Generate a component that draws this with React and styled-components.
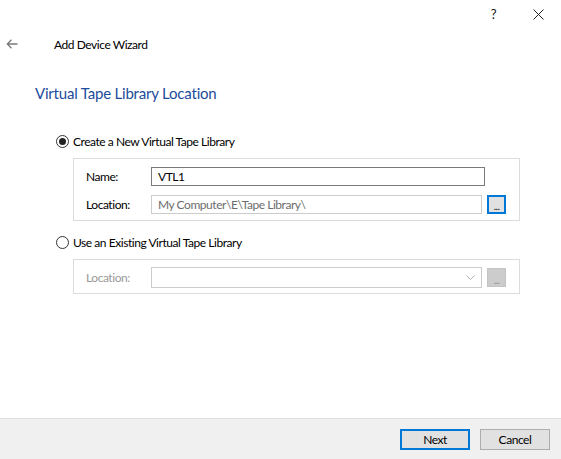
import React from 'react';
import styled, { createGlobalStyle } from 'styled-components';

const GlobalStyle = createGlobalStyle`
  html, body { margin: 0; padding: 0; background: #fff; }
  body {
    font-family: "Segoe UI", Lato, "Noto Sans", sans-serif;
    font-size: 12px;
    letter-spacing: -0.45px;
    color: #000;
  }
`;

const Window = styled.div`
  width: 561px;
  height: 459px;
  display: flex;
  flex-direction: column;
  background: #fff;
  overflow: hidden;
`;

const TitleBar = styled.div`
  height: 28px;
  display: flex;
  justify-content: flex-end;
`;

const CaptionButton = styled.div`
  width: 45px;
  height: 28px;
  display: flex;
  align-items: center;
  justify-content: center;
  font-size: 13px;
  color: #111;
`;

const HeaderRow = styled.div`
  height: 32px;
  display: flex;
  align-items: center;
`;

const BackButton = styled.div`
  width: 24px;
  display: flex;
  justify-content: center;
  margin-right: 30px;
`;

const HeaderText = styled.span`
  font-size: 12px;
`;

const PageTitle = styled.h1`
  margin: 24px 0 0 35px;
  font-size: 15px;
  letter-spacing: -0.2px;
  font-weight: normal;
  color: #1c4c9c;
  line-height: 18px;
`;

const Content = styled.div`
  padding: 32px 41px 0 56px;
  display: flex;
  flex-direction: column;
`;

const RadioRow = styled.label`
  display: flex;
  align-items: center;
  gap: 4px;
  height: 14px;
  margin-top: ${p => p.top || 0}px;
`;

const RadioCircle = styled.span`
  width: 11px;
  height: 11px;
  border: 1px solid #333;
  border-radius: 50%;
  display: flex;
  align-items: center;
  justify-content: center;
  background: #fff;
  &::after {
    content: '';
    width: 7px;
    height: 7px;
    border-radius: 50%;
    background: ${p => (p.checked ? '#222' : 'transparent')};
  }
`;

const Group = styled.div`
  margin: ${p => p.top}px 0 0 17px;
  border: 1px solid #dcdcdc;
  padding: ${p => p.pad};
  display: flex;
  flex-direction: column;
  gap: 9px;
`;

const FieldRow = styled.div`
  display: flex;
  align-items: center;
  height: ${p => p.h || 19}px;
`;

const FieldLabel = styled.span`
  width: 65px;
  padding-left: 12px;
  color: ${p => (p.disabled ? '#9a9a9a' : '#000')};
`;

const TextBox = styled.div`
  width: ${p => p.w}px;
  height: ${p => p.h || 19}px;
  box-sizing: border-box;
  border: 1px solid ${p => p.border};
  background: #fff;
  padding: 0 6px;
  display: flex;
  align-items: center;
  justify-content: space-between;
  color: ${p => p.color || '#000'};
`;

const BrowseButton = styled.div`
  width: 19px;
  height: 19px;
  box-sizing: border-box;
  margin-left: 5px;
  border: ${p => (p.disabled ? '1px solid #c4c4c4' : '2px solid #0078d7')};
  background: ${p => (p.disabled ? '#cccccc' : '#e1e1e1')};
  color: ${p => (p.disabled ? '#8a8a8a' : '#000')};
  display: flex;
  align-items: flex-end;
  justify-content: center;
  font-size: 10px;
  line-height: 12px;
  letter-spacing: -0.5px;
`;

const Spacer = styled.div`
  flex: 1;
`;

const Footer = styled.div`
  height: 41px;
  border-top: 1px solid #dfdfdf;
  background: #f0f0f0;
  display: flex;
  justify-content: flex-end;
  align-items: flex-start;
  gap: 10px;
  padding: 10px 11px 0 0;
  box-sizing: border-box;
`;

const DialogButton = styled.button`
  width: 70px;
  height: 21px;
  box-sizing: border-box;
  font: inherit;
  font-size: 12px;
  letter-spacing: inherit;
  background: #e1e1e1;
  border: ${p => (p.primary ? '2px solid #0078d7' : '1px solid #adadad')};
  color: #000;
  padding: 0;
`;

const ArrowIcon = () => (
  <svg width="12" height="10" viewBox="0 0 12 10">
    <path d="M5.5 0.8 L1.3 5 L5.5 9.2 M1.3 5 H11.5" fill="none" stroke="#7a7a7a" strokeWidth="1.3" />
  </svg>
);

const CloseIcon = () => (
  <svg width="11" height="11" viewBox="0 0 11 11">
    <path d="M0.5 0.5 L10.5 10.5 M10.5 0.5 L0.5 10.5" stroke="#222" strokeWidth="1" />
  </svg>
);

const Chevron = () => (
  <svg width="9" height="5" viewBox="0 0 9 5">
    <path d="M0.5 0.5 L4.5 4.5 L8.5 0.5" fill="none" stroke="#b0b0b0" strokeWidth="1" />
  </svg>
);

export default function App() {
  return (
    <Window>
      <GlobalStyle />
      <TitleBar>
        <CaptionButton>?</CaptionButton>
        <CaptionButton><CloseIcon /></CaptionButton>
      </TitleBar>
      <HeaderRow>
        <BackButton><ArrowIcon /></BackButton>
        <HeaderText>Add Device Wizard</HeaderText>
      </HeaderRow>
      <PageTitle>Virtual Tape Library Location</PageTitle>
      <Content>
        <RadioRow>
          <RadioCircle checked />
          Create a New Virtual Tape Library
        </RadioRow>
        <Group top={10} pad="8px 13px 6px 0">
          <FieldRow>
            <FieldLabel>Name:</FieldLabel>
            <TextBox w={334} border="#7a7a7a">VTL1</TextBox>
          </FieldRow>
          <FieldRow>
            <FieldLabel>Location:</FieldLabel>
            <TextBox w={331} border="#cccccc" color="#6d6d6d">My Computer\E\Tape Library\</TextBox>
            <BrowseButton>...</BrowseButton>
          </FieldRow>
        </Group>
        <RadioRow top={14}>
          <RadioCircle />
          Use an Existing Virtual Tape Library
        </RadioRow>
        <Group top={10} pad="7px 13px 5px 0">
          <FieldRow h={21}>
            <FieldLabel disabled>Location:</FieldLabel>
            <TextBox w={331} h={21} border="#cccccc">
              <span />
              <Chevron />
            </TextBox>
            <BrowseButton disabled>...</BrowseButton>
          </FieldRow>
        </Group>
      </Content>
      <Spacer />
      <Footer>
        <DialogButton primary>Next</DialogButton>
        <DialogButton>Cancel</DialogButton>
      </Footer>
    </Window>
  );
}
